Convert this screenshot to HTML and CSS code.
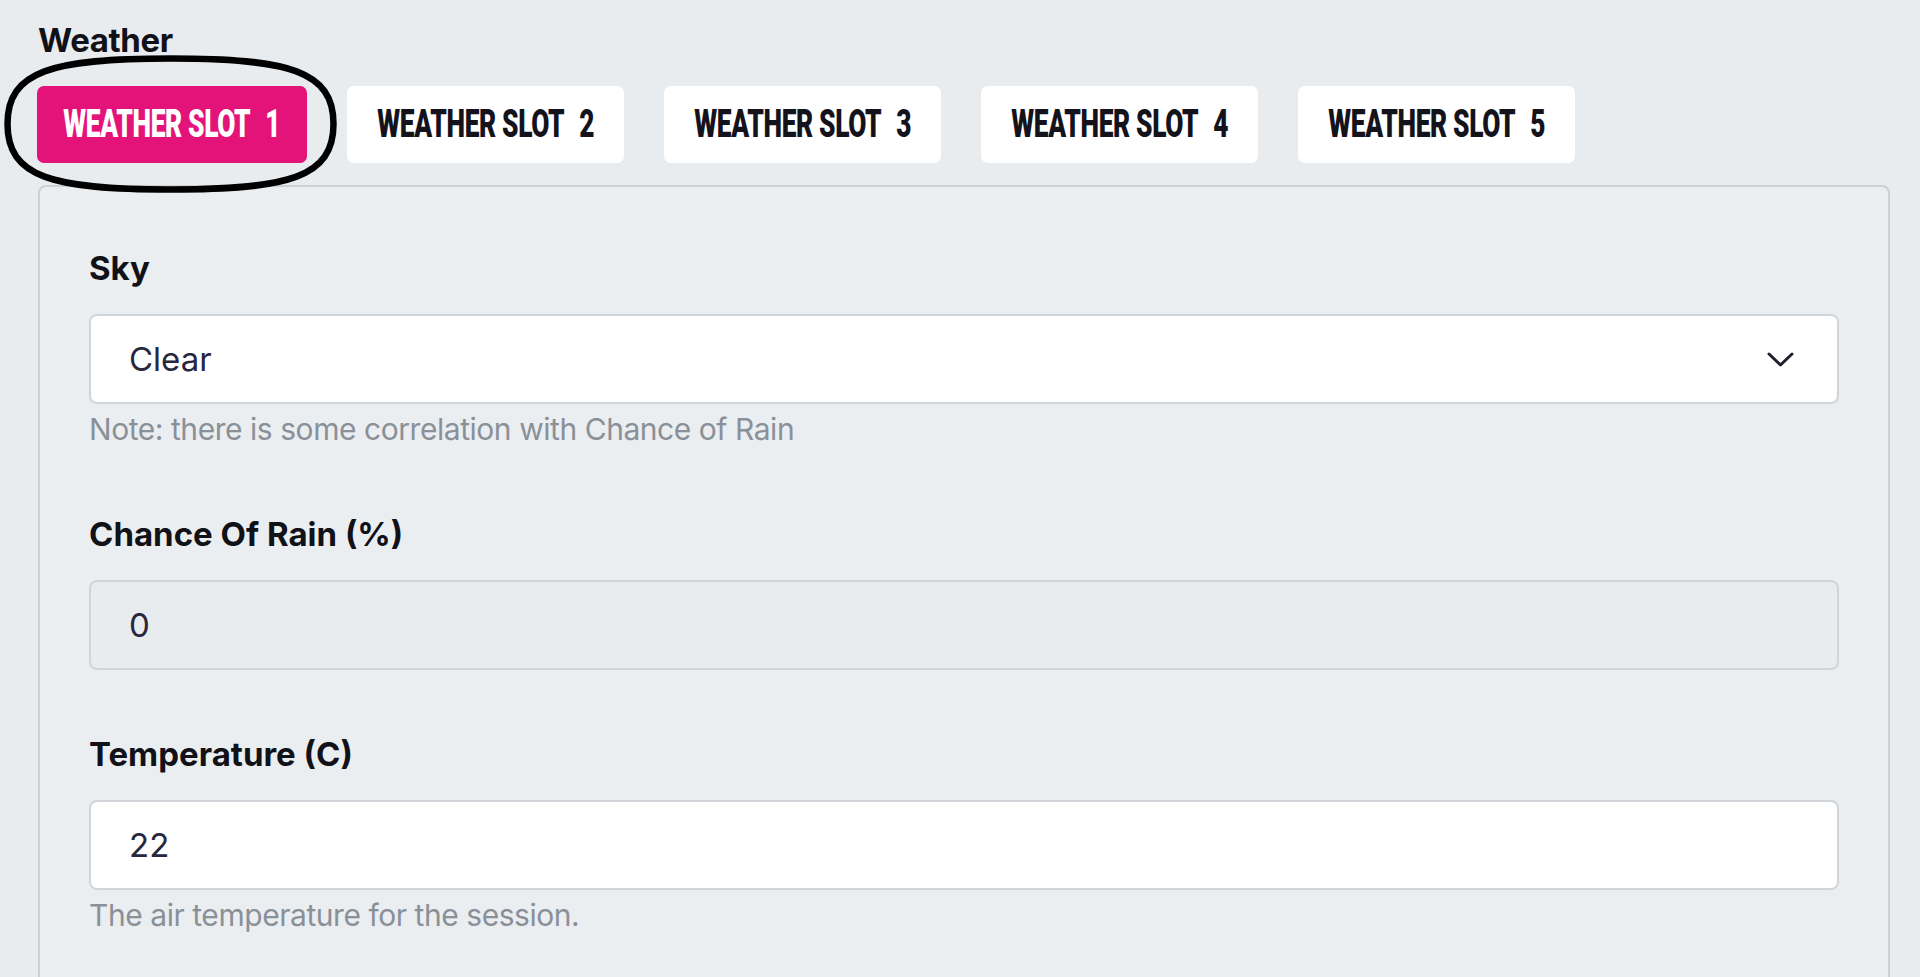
FILE: index.html
```html
<!DOCTYPE html>
<html lang="en">
<head>
<meta charset="utf-8">
<title>Weather</title>
<link rel="stylesheet" href="styles.css">
</head>
<body>
<div class="page">
  <div class="title">Weather</div>
  <div class="tabs">
    <div class="tab tab--active"><span class="tab-label">WEATHER SLOT<span class="num">1</span></span></div>
    <div class="tab"><span class="tab-label">WEATHER SLOT<span class="num">2</span></span></div>
    <div class="tab"><span class="tab-label">WEATHER SLOT<span class="num">3</span></span></div>
    <div class="tab"><span class="tab-label">WEATHER SLOT<span class="num">4</span></span></div>
    <div class="tab"><span class="tab-label">WEATHER SLOT<span class="num">5</span></span></div>
    <svg class="ring" viewBox="0 0 333 138" width="333" height="138" aria-hidden="true">
      <path d="M3.5 69 C3.5 16 48 3.5 166.5 3.5 C285 3.5 329.5 16 329.5 69 C329.5 122 285 134.5 166.5 134.5 C48 134.5 3.5 122 3.5 69 Z" fill="none" stroke="#000" stroke-width="6.5"/>
    </svg>
  </div>
  <div class="panel">
    <div class="field">
      <div class="label">Sky</div>
      <div class="control">
        <span class="value">Clear</span>
        <svg class="chev" viewBox="0 0 27 15" width="27" height="15" aria-hidden="true"><path d="M2 2 L13.5 13 L25 2" fill="none" stroke="#1f1f2e" stroke-width="3" stroke-linecap="round" stroke-linejoin="round"/></svg>
      </div>
      <div class="help">Note: there is some correlation with Chance of Rain</div>
    </div>
    <div class="field">
      <div class="label">Chance Of Rain (%)</div>
      <div class="control control--disabled"><span class="value">0</span></div>
    </div>
    <div class="field">
      <div class="label">Temperature (C)</div>
      <div class="control"><span class="value">22</span></div>
      <div class="help">The air temperature for the session.</div>
    </div>
  </div>
</div>
</body>
</html>
```

FILE: styles.css
```css
html, body {
  margin: 0;
  padding: 0;
  background: #e9ecef;
  overflow: hidden;
}
.page {
  padding: 20px 30px 0 38px;
  font-family: Inter, "Noto Sans", sans-serif;
  color: #111118;
}
.title {
  font-weight: 700;
  font-size: 33px;
  line-height: 40px;
  letter-spacing: -0.4px;
}
.tabs {
  position: relative;
  display: flex;
  gap: 40px;
  margin-top: 26px;
  margin-left: -1px;
}
.tab {
  width: 277px;
  height: 77px;
  background: #ffffff;
  border-radius: 7px;
  display: flex;
  align-items: center;
  justify-content: center;
  color: #14131c;
  overflow: hidden;
}
.tab--active {
  width: 270px;
  background: #e3137a;
  color: #ffffff;
}
.tab-label {
  display: inline-block;
  font-family: Roboto, "Liberation Sans", sans-serif;
  font-weight: 900;
  font-size: 39px;
  line-height: 1;
  white-space: nowrap;
  transform: scaleX(0.675);
  letter-spacing: -0.5px;
}
.num {
  margin-left: 22px;
}
.ring {
  position: absolute;
  left: -33px;
  top: -31px;
}
.panel {
  margin-top: 22px;
  border: 2px solid #cdd1d5;
  border-bottom: none;
  border-radius: 8px 8px 0 0;
  background: #ebeef1;
  padding: 61px 49px 80px 49px;
}
.field + .field {
  margin-top: 64px;
}
.label {
  font-weight: 700;
  font-size: 33px;
  line-height: 40px;
  letter-spacing: 0;
  margin-bottom: 26px;
}
.control {
  box-sizing: border-box;
  height: 90px;
  border: 2px solid #d1d5d9;
  border-radius: 8px;
  background: #ffffff;
  padding: 0 43px 0 38px;
  display: flex;
  align-items: center;
  justify-content: space-between;
  font-size: 33px;
  color: #27273d;
}
.control--disabled {
  background: #e9ecef;
}
.chev {
  display: block;
}
.help {
  margin-top: 7px;
  padding-bottom: 3px;
  font-size: 30px;
  line-height: 36px;
  color: #8a9098;
  letter-spacing: -0.45px;
}
```
